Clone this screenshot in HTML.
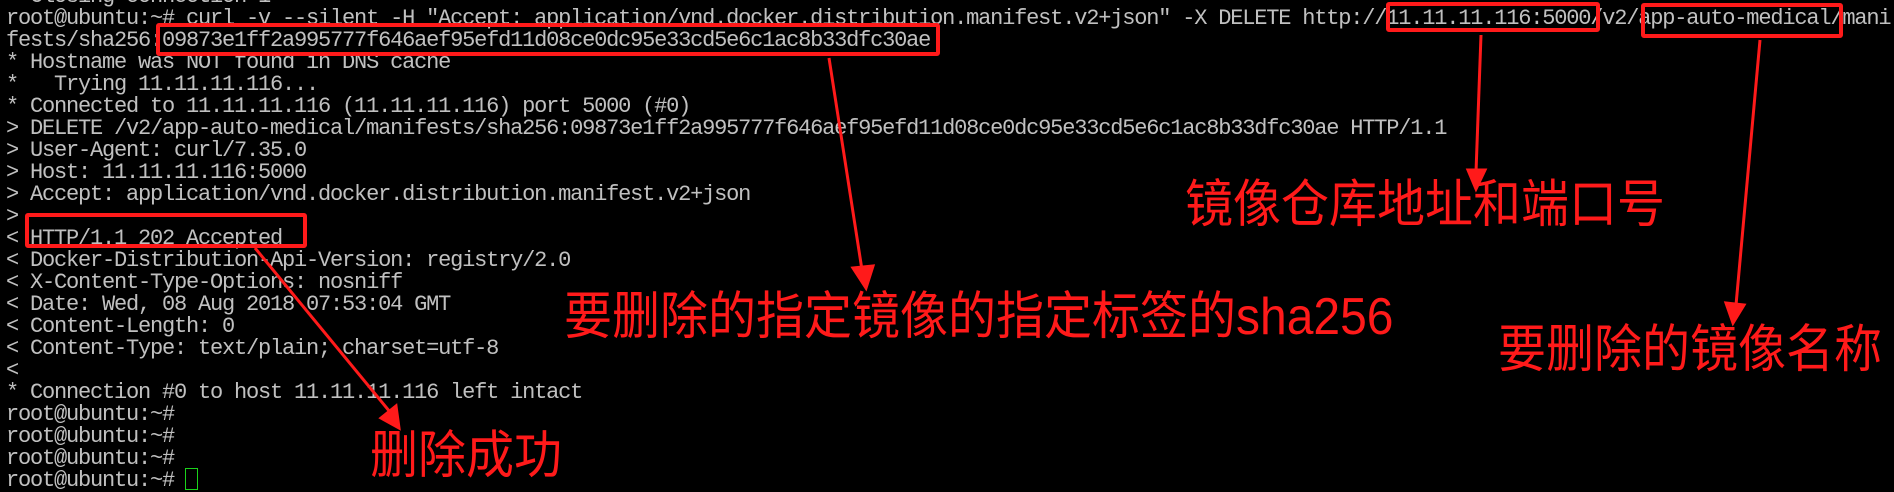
<!DOCTYPE html>
<html><head><meta charset="utf-8"><style>
html,body{margin:0;padding:0;background:#000;width:1894px;height:492px;overflow:hidden;position:relative}
pre{position:absolute;left:6px;top:-14px;margin:0;font-family:"Liberation Mono","Courier New",monospace;font-size:22px;letter-spacing:-1.2px;line-height:22px;color:#c0c0c0;white-space:pre}
.box{position:absolute;border:4px solid #ff1a1a;border-radius:3px;box-sizing:border-box}
.cn{position:absolute;font-family:"Liberation Sans","Noto Sans CJK SC",sans-serif;color:#ff1a1a;font-size:48px;line-height:48px;white-space:nowrap;transform:scaleY(1.08);transform-origin:top left}
svg{position:absolute;left:0;top:0}
.cur{position:absolute;left:185px;top:468px;width:11px;height:20px;border:1px solid #1bd31b}
</style></head><body>
<pre>* Closing connection 1
root@ubuntu:~# curl -v --silent -H "Accept: application/vnd.docker.distribution.manifest.v2+json" -X DELETE http://11.11.11.116:5000/v2/app-auto-medical/mani
fests/sha256:09873e1ff2a995777f646aef95efd11d08ce0dc95e33cd5e6c1ac8b33dfc30ae
* Hostname was NOT found in DNS cache
*   Trying 11.11.11.116...
* Connected to 11.11.11.116 (11.11.11.116) port 5000 (#0)
&gt; DELETE /v2/app-auto-medical/manifests/sha256:09873e1ff2a995777f646aef95efd11d08ce0dc95e33cd5e6c1ac8b33dfc30ae HTTP/1.1
&gt; User-Agent: curl/7.35.0
&gt; Host: 11.11.11.116:5000
&gt; Accept: application/vnd.docker.distribution.manifest.v2+json
&gt;
&lt; HTTP/1.1 202 Accepted
&lt; Docker-Distribution-Api-Version: registry/2.0
&lt; X-Content-Type-Options: nosniff
&lt; Date: Wed, 08 Aug 2018 07:53:04 GMT
&lt; Content-Length: 0
&lt; Content-Type: text/plain; charset=utf-8
&lt;
* Connection #0 to host 11.11.11.116 left intact
root@ubuntu:~#
root@ubuntu:~#
root@ubuntu:~#
root@ubuntu:~# </pre>
<div class="cur"></div>
<div class="box" style="left:156px;top:23px;width:784px;height:33px"></div>
<div class="box" style="left:25px;top:213px;width:282px;height:35px"></div>
<div class="box" style="left:1386px;top:2px;width:214px;height:30px"></div>
<div class="box" style="left:1641px;top:3px;width:202px;height:35px"></div>
<svg width="1894" height="492">
<g stroke="#ff1a1a" stroke-width="3" fill="#ff1a1a">
<line x1="829" y1="58" x2="862" y2="270"/>
<polygon points="853,268 873,266 866,288"/>
<line x1="1481" y1="35" x2="1476" y2="172"/>
<polygon points="1468,170 1485,170 1476,189"/>
<line x1="1760" y1="40" x2="1736" y2="305"/>
<polygon points="1726,303 1744,305 1733,323"/>
<line x1="255" y1="248" x2="390" y2="412"/>
<polygon points="381,418 396,406 399,428"/>
</g>
</svg>
<div class="cn" style="left:1185px;top:180px">镜像仓库地址和端口号</div>
<div class="cn" style="left:564px;top:292px">要删除的指定镜像的指定标签的sha256</div>
<div class="cn" style="left:1498px;top:325px">要删除的镜像名称</div>
<div class="cn" style="left:370px;top:431px">删除成功</div>
</body></html>
